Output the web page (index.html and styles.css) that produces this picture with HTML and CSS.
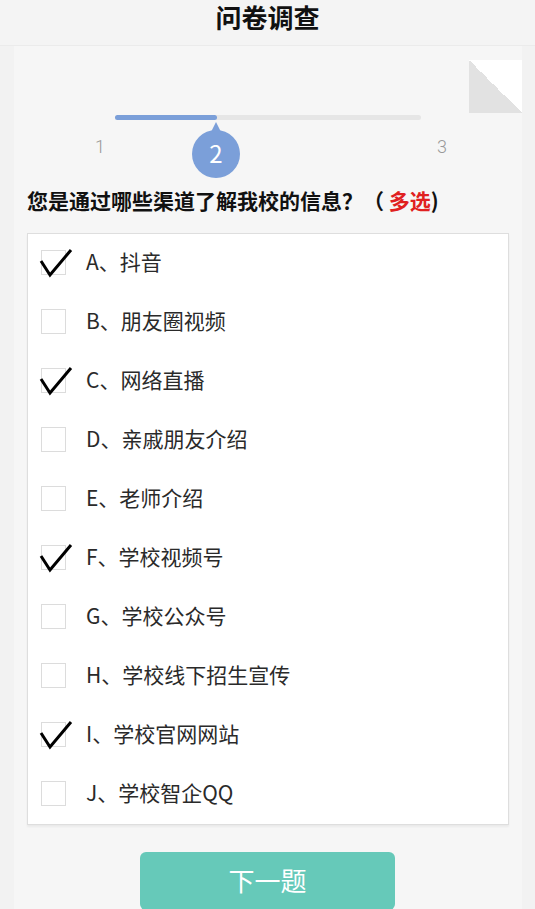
FILE: index.html
```html
<!DOCTYPE html>
<html lang="zh-CN">
<head>
    <meta charset="UTF-8">
    <meta name="viewport" content="width=device-width, initial-scale=1.0">
    <title>问卷调查</title>
    <link rel="stylesheet" href="styles.css">
</head>
<body>

    <!-- Header -->
    <div class="header">
        <h1>问卷调查</h1>
    </div>

    <div class="panel">
        <div class="fold"></div>

        <!-- Progress -->
        <div class="progress">
            <div class="track">
                <div class="fill" style="width: 33.3%;"></div>
                <div class="bubble" style="left: 33.3%;">2</div>
            </div>
            <div class="steps">
                <span>1</span>
                <span>3</span>
            </div>
        </div>

        <!-- Question -->
        <p class="question">您是通过哪些渠道了解我校的信息？（ <span class="multi">多选</span>)</p>

        <div class="options">
            <div class="option checked"><span class="box"><svg viewBox="0 0 32 28"><path d="M1 12 L10 26 L31 1"/></svg></span><span class="label">A、抖音</span></div>
            <div class="option"><span class="box"></span><span class="label">B、朋友圈视频</span></div>
            <div class="option checked"><span class="box"><svg viewBox="0 0 32 28"><path d="M1 12 L10 26 L31 1"/></svg></span><span class="label">C、网络直播</span></div>
            <div class="option"><span class="box"></span><span class="label">D、亲戚朋友介绍</span></div>
            <div class="option"><span class="box"></span><span class="label">E、老师介绍</span></div>
            <div class="option checked"><span class="box"><svg viewBox="0 0 32 28"><path d="M1 12 L10 26 L31 1"/></svg></span><span class="label">F、学校视频号</span></div>
            <div class="option"><span class="box"></span><span class="label">G、学校公众号</span></div>
            <div class="option"><span class="box"></span><span class="label">H、学校线下招生宣传</span></div>
            <div class="option checked"><span class="box"><svg viewBox="0 0 32 28"><path d="M1 12 L10 26 L31 1"/></svg></span><span class="label">I、学校官网网站</span></div>
            <div class="option"><span class="box"></span><span class="label">J、学校智企QQ</span></div>
        </div>

        <button class="next-btn">下一题</button>
    </div>

</body>
</html>
```

FILE: styles.css
```css
/* Reset */
* {
    margin: 0;
    padding: 0;
    box-sizing: border-box;
}

body {
    font-family: "Noto Sans CJK SC", "Noto Sans", sans-serif;
    background: #f2f2f2;
    color: #222;
}

/* Header */
.header {
    height: 46px;
    background: #f4f4f4;
    border-bottom: 1px solid #ebebeb;
    text-align: center;
}

.header h1 {
    font-size: 26px;
    font-weight: bold;
    line-height: 34px;
    color: #111;
}

/* Panel */
.panel {
    position: relative;
    margin: 0 13px 0 14px;
    padding: 0 13px;
    background: #f6f6f6;
    min-height: 863px;
}

.fold {
    position: absolute;
    top: 14px;
    right: 0;
    width: 53px;
    height: 53px;
    background: linear-gradient(to bottom left, #ffffff 50%, #e2e2e2 50%);
}

/* Progress */
.progress {
    padding-top: 69px;
}

.track {
    position: relative;
    width: 306px;
    height: 5px;
    margin-left: 88px;
    border-radius: 3px;
    background: #e6e6e6;
}

.fill {
    height: 100%;
    border-radius: 3px;
    background: #7b9fd9;
}

.bubble {
    position: absolute;
    top: 15px;
    width: 48px;
    height: 48px;
    margin-left: -25px;
    border-radius: 50%;
    background: #7b9fd9;
    color: white;
    font-size: 24px;
    line-height: 46px;
    text-align: center;
}

.bubble::before {
    content: "";
    position: absolute;
    left: 19px;
    top: -8px;
    border-left: 5px solid transparent;
    border-right: 5px solid transparent;
    border-bottom: 10px solid #7b9fd9;
}

.steps {
    display: flex;
    justify-content: space-between;
    width: 352px;
    margin: 17px 0 0 68px;
    font-family: "Roboto", sans-serif;
    font-weight: 300;
    font-size: 18px;
    line-height: 20px;
    color: #999;
}

/* Question */
.question {
    margin-top: 29px;
    font-size: 21px;
    font-weight: bold;
    line-height: 28px;
    color: #111;
}

.multi {
    color: #e02020;
}

/* Options */
.options {
    margin-top: 19px;
    background: white;
    border: 1px solid #dedede;
    box-shadow: 0 2px 2px rgba(0, 0, 0, 0.05);
}

.option {
    display: flex;
    align-items: center;
    gap: 20px;
    height: 59px;
    padding-left: 13px;
    font-size: 21px;
    color: #2a2a2a;
}

.label {
    padding-bottom: 6px;
}

.box {
    position: relative;
    flex: none;
    width: 25px;
    height: 25px;
    margin-top: -2px;
    border: 1px solid #dcdcdc;
}

.box svg {
    position: absolute;
    left: -2px;
    top: -2px;
    width: 32px;
    height: 28px;
    overflow: visible;
}

.box path {
    fill: none;
    stroke: #000;
    stroke-width: 3;
    stroke-linejoin: miter;
}

/* Button */
.next-btn {
    display: block;
    width: 255px;
    height: 58px;
    margin: 27px 0 0 113px;
    padding-bottom: 4px;
    border: none;
    border-radius: 6px;
    background: #66c9b9;
    color: white;
    font-family: inherit;
    font-size: 26px;
    cursor: pointer;
}
```
